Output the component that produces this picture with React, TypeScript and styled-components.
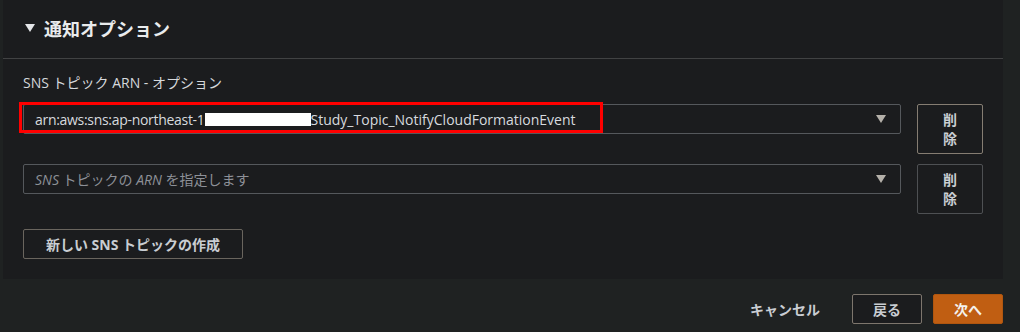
import React from "react";
import styled, { createGlobalStyle } from "styled-components";

const Global = createGlobalStyle`
  html, body { margin: 0; padding: 0; background: #1f2222; }
  body { font-family: "Open Sans", "Noto Sans CJK JP", sans-serif; color: #d1d5db; }
  * { box-sizing: border-box; }
`;

const Page = styled.div`
  width: 1020px;
  height: 332px;
  padding: 0 17px 0 3px;
  background: #1f2222;
  overflow: hidden;
`;

const Card = styled.section`
  background: #1b1c1e;
`;

const Header = styled.header`
  height: 59px;
  border-bottom: 1px solid #414243;
  display: flex;
  align-items: center;
  padding: 0 0 2px 22px;
  gap: 9px;
`;

const Caret = styled.span`
  width: 0;
  height: 0;
  border-left: 5px solid transparent;
  border-right: 5px solid transparent;
  border-top: 8px solid #e3e5e8;
`;

const Title = styled.h2`
  margin: 0;
  font-family: "Noto Sans CJK JP", sans-serif;
  font-size: 18px;
  font-weight: 700;
  color: #e9ebed;
  line-height: 24px;
`;

const Body = styled.div`
  padding: 13px 20px 20px 20px;
  display: flex;
  flex-direction: column;
`;

const Label = styled.div`
  font-size: 14px;
  line-height: 22px;
  color: #d5d8dc;
  margin-bottom: 10px;
`;

const Row = styled.div`
  display: flex;
  gap: 16px;
  align-items: flex-start;
  margin-bottom: 10px;
`;

const SelectWrap = styled.div`
  position: relative;
  flex: 1;
`;

const Select = styled.div<{ $placeholder?: boolean }>`
  height: 30px;
  border: 1px solid #55585c;
  border-radius: 2px;
  display: flex;
  align-items: center;
  padding: 0 14px 0 11px;
  font-size: 14px;
  color: ${(p) => (p.$placeholder ? "#8d9097" : "#d7dadf")};
  white-space: nowrap;
`;

const SelectText = styled.span`
  flex: 1;
  display: flex;
  align-items: center;
  white-space: pre;
`;

const Tight = styled.span`
  letter-spacing: -0.3px;
`;

const Em = styled.span`
  font-style: italic;
`;

const Jp = styled.span`
  font-family: "Noto Sans CJK JP", sans-serif;
`;

const Redacted = styled.span`
  display: inline-block;
  width: 106px;
  height: 13px;
  background: #ffffff;
`;

const Arrow = styled.span`
  width: 0;
  height: 0;
  border-left: 5px solid transparent;
  border-right: 5px solid transparent;
  border-top: 8px solid #b5b1aa;
`;

const Highlight = styled.div`
  position: absolute;
  left: -4px;
  top: -2px;
  width: 584px;
  height: 31px;
  border: 3px solid #ff0000;
  pointer-events: none;
`;

const DeleteButton = styled.button<{ $focus?: boolean }>`
  width: 66px;
  height: 50px;
  background: transparent;
  border: 1px solid ${(p) => (p.$focus ? "#857d72" : "#4e5053")};
  border-radius: 2px;
  font-family: "Noto Sans CJK JP", sans-serif;
  font-size: 14px;
  font-weight: 700;
  line-height: 19px;
  color: #c9cdd2;
  padding: 0 24px;
  display: flex;
  align-items: center;
  justify-content: center;
`;

const CreateButton = styled.button`
  align-self: flex-start;
  margin-top: 5px;
  width: 220px;
  height: 30px;
  background: transparent;
  border: 1px solid #6a655e;
  border-radius: 2px;
  font-family: "Open Sans", "Noto Sans CJK JP", sans-serif;
  font-size: 14px;
  font-weight: 700;
  color: #c9cdd2;
`;

const Footer = styled.footer`
  display: flex;
  justify-content: flex-end;
  align-items: center;
  margin-top: 15px;
  gap: 11px;
`;

const LinkButton = styled.button`
  background: transparent;
  border: none;
  height: 30px;
  padding: 0 21px 0 20px;
  font-family: "Noto Sans CJK JP", sans-serif;
  font-size: 14px;
  font-weight: 700;
  color: #c9cdd2;
`;

const FooterButton = styled.button<{ $primary?: boolean }>`
  width: 70px;
  height: 30px;
  border-radius: 2px;
  border: 1px solid ${(p) => (p.$primary ? "#b0560f" : "#7d766d")};
  background: ${(p) => (p.$primary ? "#c05e12" : "#1b1c1e")};
  color: ${(p) => (p.$primary ? "#f4f1ec" : "#c9cdd2")};
  font-family: "Noto Sans CJK JP", sans-serif;
  font-size: 14px;
  font-weight: 700;
`;

export default function App() {
  return (
    <Page>
      <Global />
      <Card>
        <Header>
          <Caret />
          <Title>通知オプション</Title>
        </Header>
        <Body>
          <Label>SNS トピック ARN - オプション</Label>
          <Row>
            <SelectWrap>
              <Select>
                <SelectText>
                  <Tight>arn:aws:sns:ap-northeast-1</Tight>
                  <Redacted />
                  Study_Topic_NotifyCloudFormationEvent
                </SelectText>
                <Arrow />
              </Select>
              <Highlight />
            </SelectWrap>
            <DeleteButton $focus>削除</DeleteButton>
          </Row>
          <Row>
            <SelectWrap>
              <Select $placeholder>
                <SelectText>
                  <Em>SNS </Em>
                  <Jp>トピックの</Jp>
                  <Em> ARN </Em>
                  <Jp>を指定します</Jp>
                </SelectText>
                <Arrow />
              </Select>
            </SelectWrap>
            <DeleteButton>削除</DeleteButton>
          </Row>
          <CreateButton>新しい SNS トピックの作成</CreateButton>
        </Body>
      </Card>
      <Footer>
        <LinkButton>キャンセル</LinkButton>
        <FooterButton>戻る</FooterButton>
        <FooterButton $primary>次へ</FooterButton>
      </Footer>
    </Page>
  );
}
